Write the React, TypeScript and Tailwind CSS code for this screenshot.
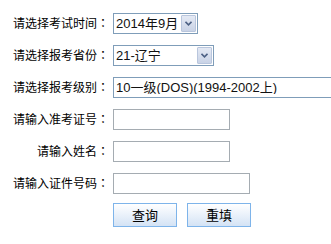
import type { ReactNode } from "react";

const LABEL_FONT = {
  fontFamily: '"SimSun", "Noto Sans CJK SC", sans-serif',
};

function Row({ label, children }: { label: string; children: ReactNode }) {
  return (
    <div className="flex h-8 items-center">
      <label className="w-[110px] shrink-0 pr-[1px] text-right text-[12px] text-black">
        {label}
        <span style={{ fontFamily: '"Noto Sans CJK TC", sans-serif' }}>：</span>
      </label>
      <div className="ml-[3px] flex items-center">{children}</div>
    </div>
  );
}

function Select({
  value,
  width,
  arrow = true,
}: {
  value: string;
  width: string;
  arrow?: boolean;
}) {
  return (
    <div
      className={`relative flex h-[21px] shrink-0 items-center border border-[#7f9db9] bg-white ${width}`}
    >
      <select
        defaultValue={value}
        className="h-full w-full appearance-none bg-transparent pl-[2px] text-[13px] leading-none text-[#111] outline-none"
        style={{ fontFamily: '"Liberation Sans", Arial, "Noto Sans CJK SC", sans-serif' }}
      >
        <option>{value}</option>
      </select>
      {arrow && (
        <div className="pointer-events-none absolute right-[1px] top-[1px] flex h-[17px] w-[15px] items-center justify-center rounded-[1px] border border-[#b9c6dd] bg-gradient-to-b from-[#e4e9f4] to-[#c9d3e6]">
          <svg width="7" height="5" viewBox="0 0 7 5">
            <path d="M0.5 0.8 L3.5 3.8 L6.5 0.8" fill="none" stroke="#4d6185" strokeWidth="1.6" />
          </svg>
        </div>
      )}
    </div>
  );
}

function TextInput({ width }: { width: string }) {
  return (
    <input
      type="text"
      className={`h-[21px] border border-[#a5acb2] bg-white px-1 text-[13px] outline-none ${width}`}
    />
  );
}

function Btn({ children }: { children: string }) {
  return (
    <button
      type="button"
      className="h-[24px] w-[64px] border border-[#7eb4ea] bg-gradient-to-b from-white to-[#d4e3f5] text-[13px] text-black"
    >
      {children}
    </button>
  );
}

export default function App() {
  return (
    <div
      className="h-[244px] w-[331px] overflow-hidden bg-white pt-[7px]"
      style={LABEL_FONT}
    >
      <Row label="请选择考试时间">
        <Select value="2014年9月" width="w-[85px]" />
      </Row>
      <Row label="请选择报考省份">
        <Select value="21-辽宁" width="w-[101px]" />
      </Row>
      <Row label="请选择报考级别">
        <Select value="10一级(DOS)(1994-2002上)" width="w-[240px]" arrow={false} />
      </Row>
      <Row label="请输入准考证号">
        <TextInput width="w-[117px]" />
      </Row>
      <Row label="请输入姓名">
        <TextInput width="w-[117px]" />
      </Row>
      <Row label="请输入证件号码">
        <TextInput width="w-[137px]" />
      </Row>
      <div className="flex h-8 items-center pl-[113px]">
        <div className="flex gap-[10px]">
          <Btn>查询</Btn>
          <Btn>重填</Btn>
        </div>
      </div>
    </div>
  );
}
